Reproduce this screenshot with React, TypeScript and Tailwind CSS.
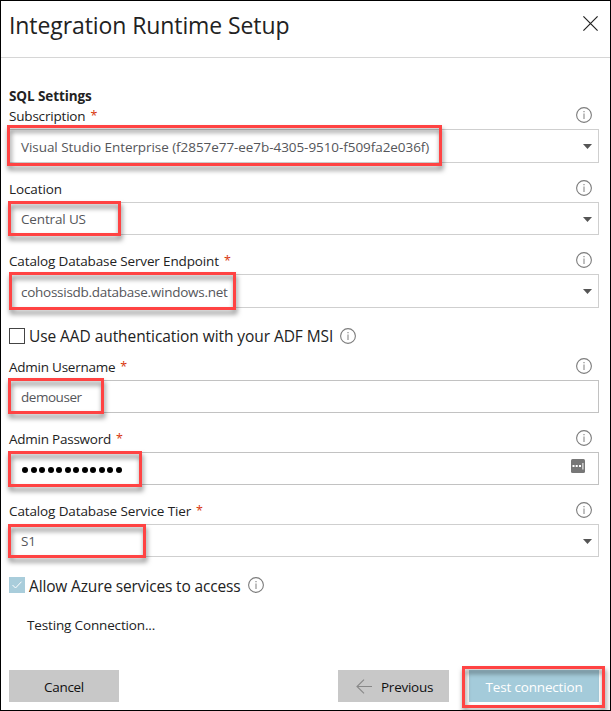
import type { ReactNode } from "react";

function InfoIcon() {
  return (
    <svg className="h-4 w-4 shrink-0" viewBox="0 0 16 16" fill="none">
      <circle cx="8" cy="8" r="7.4" stroke="#7c7c7c" strokeWidth="1.1" />
      <path d="M8 6.5V12" stroke="#8a8a8a" strokeWidth="1.1" />
      <path d="M8 4V5.2" stroke="#8a8a8a" strokeWidth="1.2" />
    </svg>
  );
}

/* Red callout frame laid over a control */
function Highlight({ className }: { className: string }) {
  return (
    <div
      className={`pointer-events-none absolute border-3 border-[#ff4343] drop-shadow-[1px_4px_2.5px_rgba(0,0,0,0.5)] ${className}`}
    />
  );
}

function Field({
  label,
  labelClass,
  required,
  value,
  valueClass,
  boxClass,
  frameClass,
  caret,
  adornment,
  className = "mt-[17px]",
}: {
  label: string;
  labelClass: string;
  required?: boolean;
  value: ReactNode;
  valueClass: string;
  boxClass: string;
  frameClass: string;
  caret?: boolean;
  adornment?: ReactNode;
  className?: string;
}) {
  return (
    <div className={className}>
      <div className="flex h-[22px] items-start justify-between pr-[7px]">
        <div className="flex gap-[5px] text-[13.5px] leading-[18px]">
          <span className={labelClass}>{label}</span>
          {required && <span className="text-[12.5px] text-[#d8350a]">*</span>}
        </div>
        <InfoIcon />
      </div>
      <div className={`relative flex items-start justify-between border pr-[6px] pl-[11px] ${boxClass}`}>
        <div className={`text-[13.5px] leading-[18px] whitespace-nowrap text-[#55565a] ${valueClass}`}>{value}</div>
        {caret && (
          <svg className="mt-[14px] h-[6px] w-[9px]" viewBox="0 0 9 6">
            <path d="M0 0H9L4.5 5Z" fill="#555" />
          </svg>
        )}
        {adornment}
        <Highlight className={frameClass} />
      </div>
    </div>
  );
}

const dots = Array.from({ length: 12 }, (_, i) => i);

export default function App() {
  return (
    <div className="flex h-[711px] w-[611px] flex-col border border-black bg-white font-['Open_Sans','Noto_Sans',sans-serif] text-[#222]">
      <header className="flex h-[57px] items-start justify-between border-b border-[#d6d6d6] pt-2 pr-3 pl-2">
        <h1 className="text-[23px] leading-8 tracking-[-0.09px] whitespace-nowrap">Integration Runtime Setup</h1>
        <svg className="mt-[7px] h-[15px] w-[15px]" viewBox="0 0 15 15" fill="none">
          <path d="M.4.4L14.6 14.6M14.6.4L.4 14.6" stroke="#222" strokeWidth="1.2" />
        </svg>
      </header>

      <main className="flex flex-col pt-[29px] pr-[11px] pl-2">
        <h2 className="h-5 text-[13.5px] leading-[18px] font-bold tracking-[-0.1px]">SQL Settings</h2>

        <Field
          className=""
          label="Subscription"
          labelClass="tracking-[-0.188px]"
          required
          value="Visual Studio Enterprise (f2857e77-ee7b-4305-9510-f509fa2e036f)"
          valueClass="pt-2 tracking-[-0.063px]"
          boxClass="h-[34px] border-[#cfcfcf]"
          frameClass="top-[-5px] left-[-3px] h-[41px] w-[435px]"
          caret
        />
        <Field
          label="Location"
          labelClass="tracking-[-0.1px]"
          value="Central US"
          valueClass="pt-[7px] tracking-[-0.15px]"
          boxClass="h-[33px] border-[#cfcfcf]"
          frameClass="top-[-2px] left-[-2px] h-[35px] w-[113px]"
          caret
        />
        <Field
          label="Catalog Database Server Endpoint"
          labelClass="tracking-[-0.14px]"
          required
          value="cohossisdb.database.windows.net"
          valueClass="pt-2 tracking-[-0.266px]"
          boxClass="h-[34px] border-[#cfcfcf]"
          frameClass="top-[-3px] left-[-1px] h-[38px] w-[227px]"
          caret
        />

        <label className="mt-5 flex h-4 items-center">
          <span className="h-4 w-4 border border-[#444]" />
          <span className="ml-1 text-[15.5px] leading-4 tracking-[-0.074px] whitespace-nowrap">
            Use AAD authentication with your ADF MSI
          </span>
          <span className="ml-[7px]">
            <InfoIcon />
          </span>
        </label>

        <Field
          className="mt-[14px]"
          label="Admin Username"
          labelClass="tracking-[-0.242px]"
          required
          value="demouser"
          valueClass="pt-[7px] tracking-[-0.465px]"
          boxClass="h-[33px] border-[#c2c2c2]"
          frameClass="top-[-3px] left-[-2px] h-[36px] w-[96px]"
        />
        <Field
          label="Admin Password"
          labelClass="tracking-[-0.237px]"
          required
          value={
            <span className="flex gap-[2.5px] pl-px">
              {dots.map((i) => (
                <span key={i} className="h-[6px] w-[6px] rounded-full bg-black" />
              ))}
            </span>
          }
          valueClass="pt-[14px]"
          boxClass="h-[33px] border-[#c2c2c2]"
          frameClass="top-[-2px] left-[-2px] h-[36px] w-[134px]"
          adornment={
            <svg className="mt-[6px] mr-[7px] h-[14px] w-[14px]" viewBox="0 0 14 14">
              <rect width="14" height="14" rx="1.5" fill="#777" />
              <path d="M1.5 6h2v2h-2zM4.7 6h2v2h-2zM8 6h2v2H8zM11.4 4h1v6.5h-1z" fill="#fff" />
            </svg>
          }
        />
        <Field
          label="Catalog Database Service Tier"
          labelClass="tracking-[-0.125px]"
          required
          value="S1"
          valueClass="pt-[7px] tracking-[-0.2px]"
          boxClass="h-[33px] border-[#cfcfcf]"
          frameClass="top-[-1px] left-[-2px] h-[34px] w-[138px]"
          caret
        />

        <label className="mt-5 flex h-4 items-center">
          <span className="flex h-4 w-4 items-center justify-center bg-[#a9cddb]">
            <svg className="h-4 w-4" viewBox="0 0 16 16" fill="none">
              <path d="M3.5 8L6.5 11L12.5 4.7" stroke="#fff" strokeWidth="1" />
            </svg>
          </span>
          <span className="ml-1 pt-[2px] text-[15.5px] leading-4 tracking-[-0.15px] whitespace-nowrap">
            Allow Azure services to access
          </span>
          <span className="ml-[7px]">
            <InfoIcon />
          </span>
        </label>

        <p className="mt-[23px] h-5 pl-[18px] text-[13.5px] leading-[18px] tracking-[-0.151px]">Testing Connection...</p>
      </main>

      <footer className="mt-[34px] flex h-8 pl-2 text-[13.5px] leading-[18px] text-[#111]">
        <button className="h-8 w-[110px] bg-[#c8c8c8] pt-px tracking-[-0.326px]">Cancel</button>
        <button className="ml-[219px] flex h-8 w-[111px] items-center bg-[#c8c8c8] pt-px pl-[18px] tracking-[-0.253px]">
          <svg className="mr-[9px] h-4 w-4" viewBox="0 0 16 16" fill="none">
            <path d="M16 7.5H1M8 .7L1 7.5L8 14.3" stroke="#888" strokeWidth="1.1" />
          </svg>
          Previous
        </button>
        <div className="relative ml-5">
          <button className="h-8 w-[130px] bg-[#a4cbda] pt-px tracking-[-0.164px] text-white">Test connection</button>
          <Highlight className="top-[-4px] left-[-7px] h-[42px] w-[143px]" />
        </div>
      </footer>
    </div>
  );
}
